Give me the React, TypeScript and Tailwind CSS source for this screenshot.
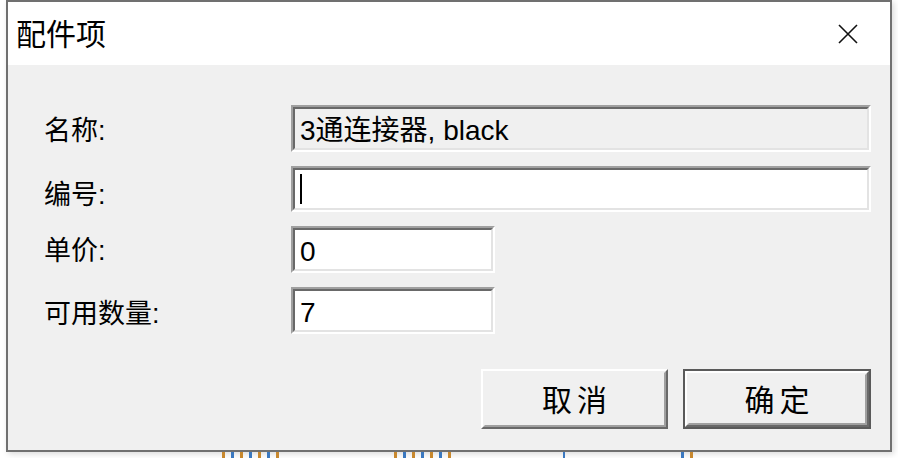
const cjk = { fontFamily: '"Liberation Sans", "Noto Sans CJK SC", sans-serif' };

function Sunken({ className, children, bg }: { className: string; children?: React.ReactNode; bg: string }) {
  return (
    <div className={`${className} border-2 border-t-[#a0a0a0] border-l-[#a0a0a0] border-b-white border-r-white`}>
      <div className={`h-full w-full border-2 border-t-[#696969] border-l-[#696969] border-b-[#e3e3e3] border-r-[#e3e3e3] ${bg} flex items-center pl-[5px] pt-[4px] text-[28px] text-black`}>
        {children}
      </div>
    </div>
  );
}

function Button({ label, primary }: { label: string; primary?: boolean }) {
  const inner = (
    <div className="h-full w-full border-2 border-t-white border-l-white border-b-[#696969] border-r-[#696969]">
      <div className="h-full w-full border-2 border-t-[#f0f0f0] border-l-[#f0f0f0] border-b-[#a0a0a0] border-r-[#a0a0a0] bg-[#f0f0f0] flex items-center justify-center tracking-[5px] text-[30px] text-black pt-[2px] pl-[5px]">
        {label}
      </div>
    </div>
  );
  return primary ? (
    <div className="w-[188px] h-[60px] border-2 border-[#5a5a5a]">{inner}</div>
  ) : (
    <div className="w-[187px] h-[60px]">{inner}</div>
  );
}

function Bars() {
  return (
    <div className="flex gap-[6px]">
      <div className="w-[3px] h-full bg-[#c8882e]" />
      <div className="w-[3px] h-full bg-[#3a78c0]" />
      <div className="w-[3px] h-full bg-[#c8882e]" />
      <div className="w-[3px] h-full bg-[#3a78c0]" />
      <div className="w-[3px] h-full bg-[#c8882e]" />
      <div className="w-[3px] h-full bg-[#3a78c0]" />
      <div className="w-[3px] h-full bg-[#c8882e]" />
    </div>
  );
}

export default function App() {
  const labels = ["名称:", "编号:", "单价:", "可用数量:"];
  return (
    <div className="w-[898px] h-[458px] bg-white overflow-hidden" style={cjk}>
      <div className="ml-[6px] w-[886px] h-[452px] border-2 border-[#707070] flex flex-col shadow-[2px_2px_6px_rgba(0,0,0,0.15)]">
        <div className="h-[63px] bg-white flex items-center justify-between pl-[8px] pr-[32px]">
          <span className="text-[30px] text-black pt-[2px]">配件项</span>
          <svg width="20" height="20" viewBox="0 0 20 20">
            <path d="M1 1 L19 19 M19 1 L1 19" stroke="#111" strokeWidth="1.6" />
          </svg>
        </div>
        <div className="flex-1 bg-[#f0f0f0] pt-[40px] pl-[36px] pr-[19px] flex flex-col">
          <div className="flex flex-col gap-[14px]">
            <div className="flex items-center h-[47px]">
              <span className="w-[247px] text-[27px] pt-[6px] text-black">{labels[0]}</span>
              <Sunken className="flex-1 h-[47px]" bg="bg-[#f0f0f0]">3通连接器, black</Sunken>
            </div>
            <div className="flex items-center h-[46px]">
              <span className="w-[247px] text-[27px] pt-[12px] text-black">{labels[1]}</span>
              <Sunken className="flex-1 h-[46px]" bg="bg-white">
                <div className="w-[2px] h-[30px] bg-black -mt-[4px]" />
              </Sunken>
            </div>
            <div className="flex items-center h-[47px]">
              <span className="w-[247px] text-[27px] pt-[4px] text-black">{labels[2]}</span>
              <Sunken className="w-[204px] h-[47px]" bg="bg-white">0</Sunken>
            </div>
            <div className="flex items-center h-[47px]">
              <span className="w-[247px] text-[27px] pt-[8px] text-black">{labels[3]}</span>
              <Sunken className="w-[204px] h-[47px]" bg="bg-white">7</Sunken>
            </div>
          </div>
          <div className="flex justify-end gap-[15px] mt-[35px]">
            <Button label="取消" />
            <Button label="确定" primary />
          </div>
        </div>
      </div>
      <div className="h-[6px] flex pl-[222px]">
        <Bars />
        <div className="ml-[115px] flex">
          <Bars />
        </div>
        <div className="w-[2px] h-full bg-[#3a78c0] ml-[112px]" />
        <div className="flex gap-[6px] ml-[116px]">
          <div className="w-[3px] h-full bg-[#3a78c0]" />
          <div className="w-[3px] h-full bg-[#c8882e]" />
        </div>
      </div>
    </div>
  );
}
